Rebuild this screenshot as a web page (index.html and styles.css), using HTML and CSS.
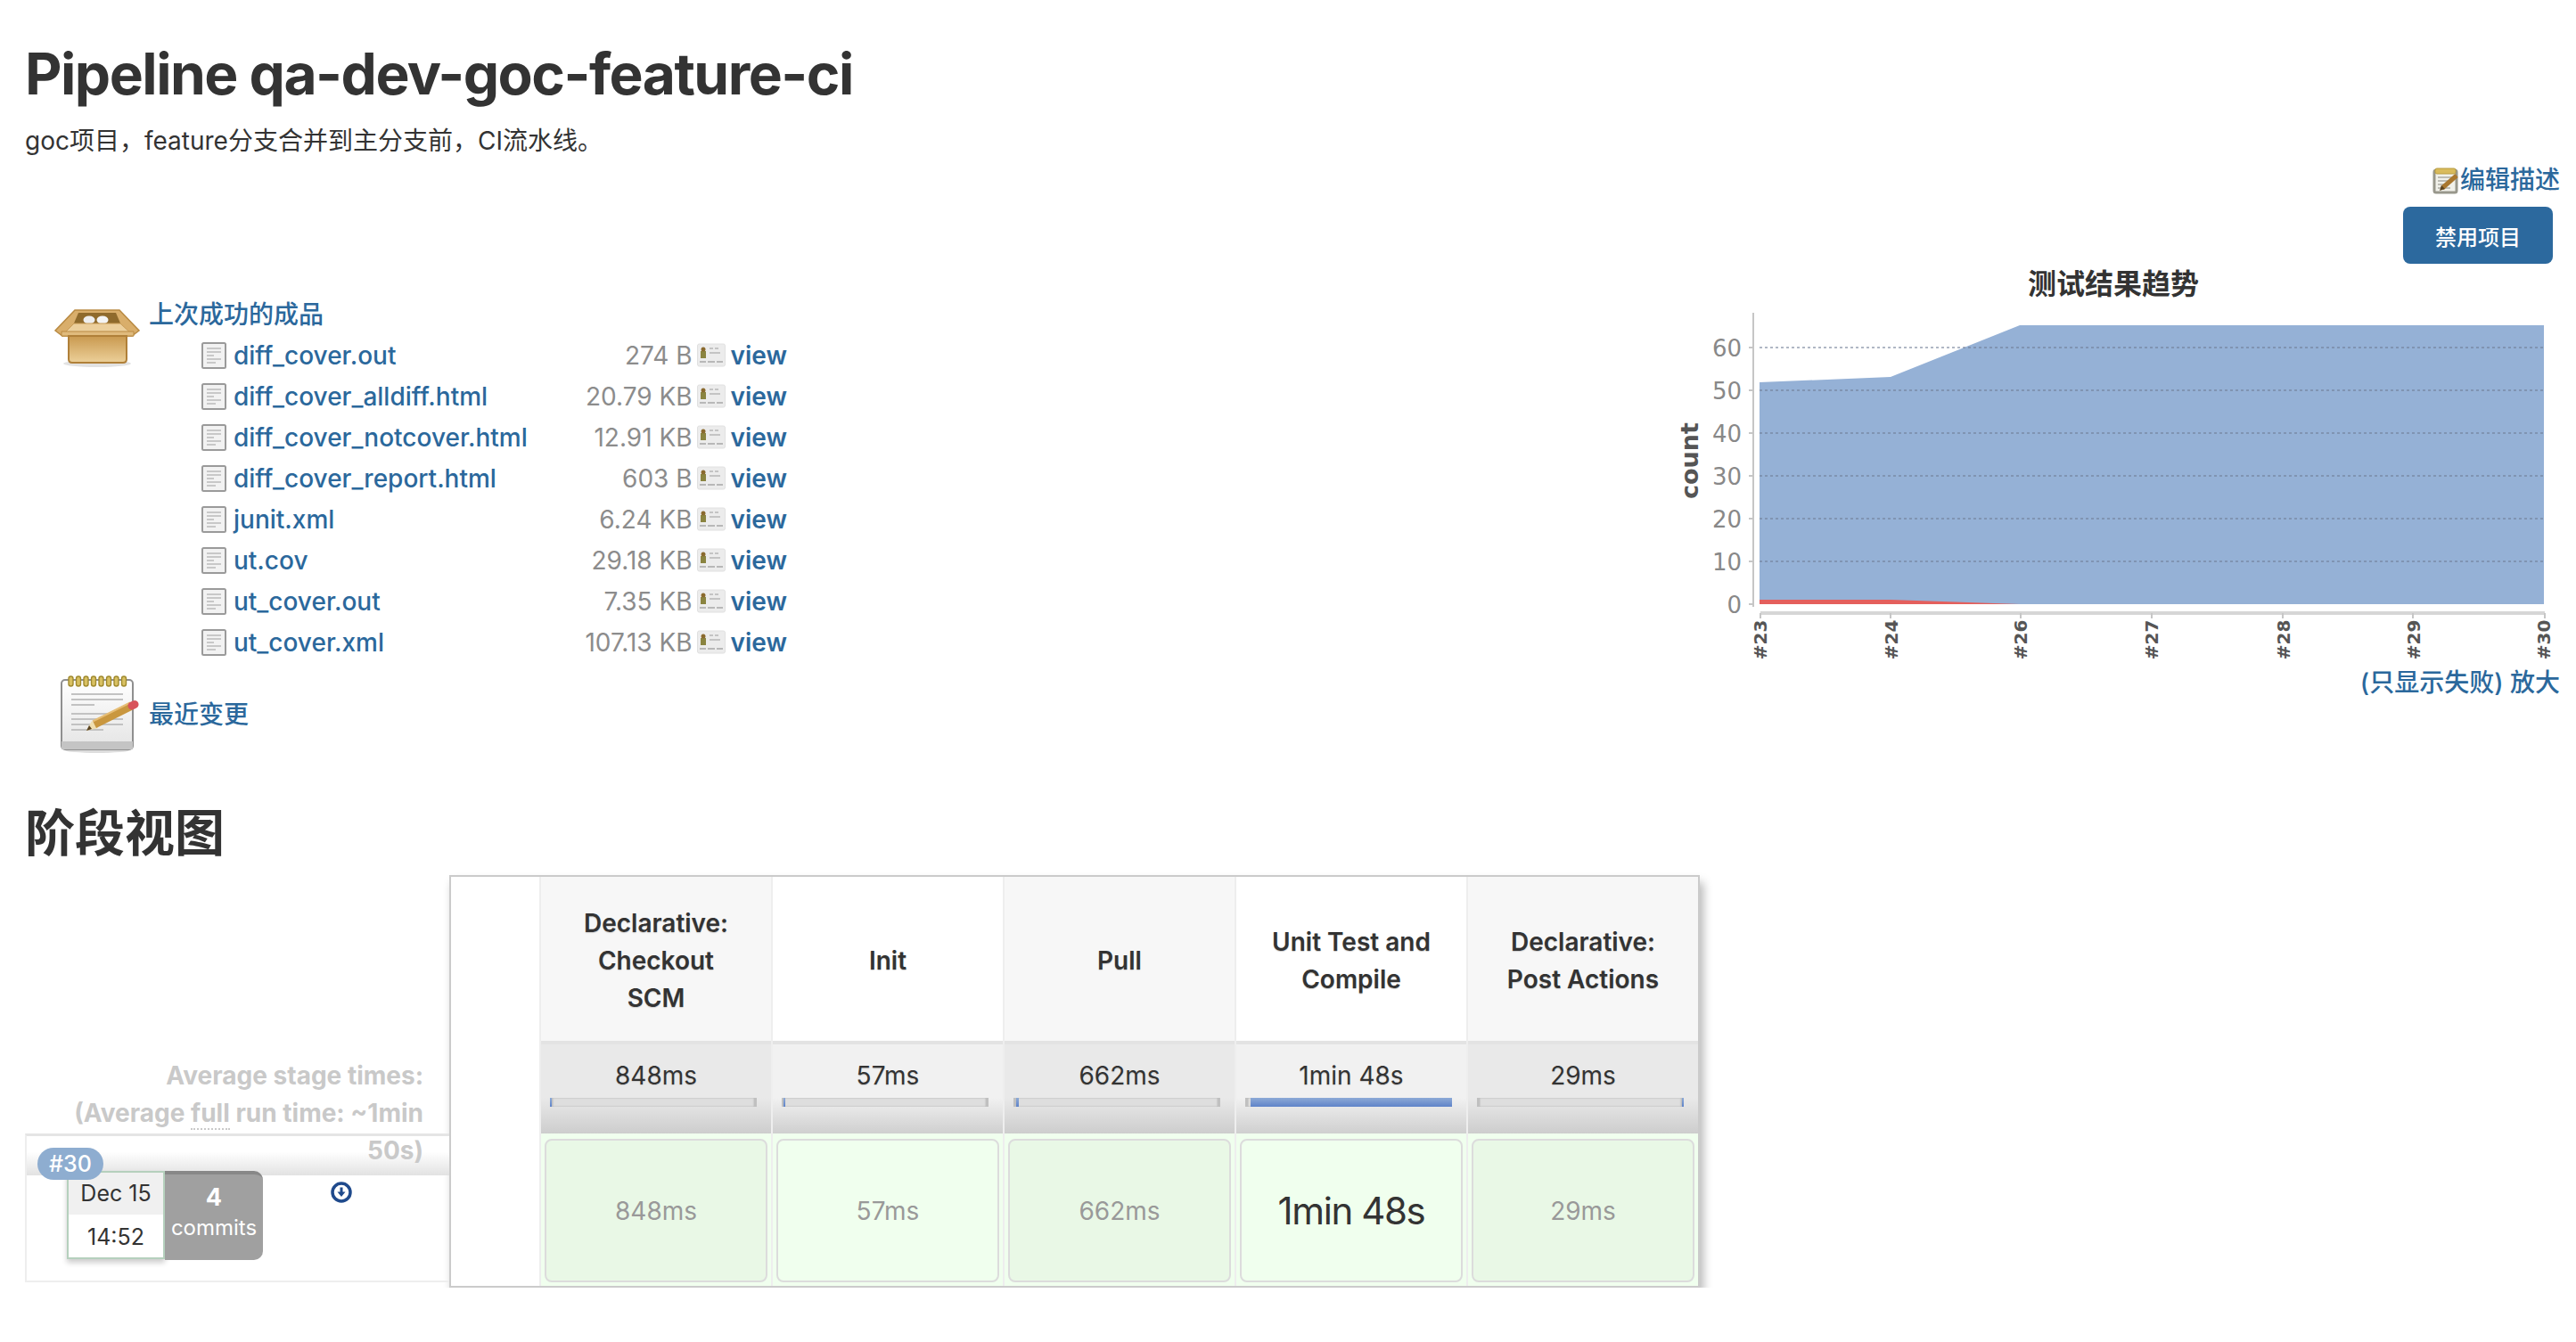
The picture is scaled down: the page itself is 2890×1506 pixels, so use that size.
FILE: index.html
```html
<!DOCTYPE html>
<html lang="zh">

<head>
    <meta charset="UTF-8">
    <title>qa-dev-goc-feature-ci</title>
    <link rel="stylesheet" href="styles.css">
</head>

<body>
    <svg class="defs" width="0" height="0">
        <defs>
            <linearGradient id="boxFront" x1="0" y1="0" x2="0" y2="1">
                <stop offset="0" stop-color="#c9994f" />
                <stop offset="1" stop-color="#ecd09a" />
            </linearGradient>
            <linearGradient id="padBody" x1="0" y1="0" x2="0" y2="1">
                <stop offset="0" stop-color="#ffffff" />
                <stop offset="1" stop-color="#e4e4e4" />
            </linearGradient>
            <symbol id="notepad" viewBox="0 0 90 90">
                <ellipse cx="43" cy="85" rx="36" ry="3" fill="#ddd" />
                <rect x="3" y="6" width="80" height="78" rx="4" fill="url(#padBody)" stroke="#8f8f8f" stroke-width="2" />
                <rect x="3" y="75" width="80" height="9" fill="#c4c4c4" />
                <g fill="#d8c062" stroke="#a08a2e" stroke-width="1.4">
                    <rect x="11" y="2" width="5" height="11" rx="2.5" />
                    <rect x="19.500" y="2" width="5" height="11" rx="2.5" />
                    <rect x="28" y="2" width="5" height="11" rx="2.5" />
                    <rect x="36.500" y="2" width="5" height="11" rx="2.5" />
                    <rect x="45" y="2" width="5" height="11" rx="2.5" />
                    <rect x="53.500" y="2" width="5" height="11" rx="2.5" />
                    <rect x="62" y="2" width="5" height="11" rx="2.5" />
                    <rect x="70.500" y="2" width="5" height="11" rx="2.5" />
                </g>
                <g stroke="#c2c2c2" stroke-width="2.2">
                    <path d="M14 22H72M14 28H72M14 34H40M14 44H72M14 50H72M14 56H72M14 62H50" />
                </g>
                <path d="M31 63 L37 52 L44 60Z" fill="#f0dfb0" />
                <path d="M31 63 L34 57 L37 61Z" fill="#5a4320" />
                <path d="M40 56 L82 35" stroke="#c9973f" stroke-width="9" />
                <path d="M38 52.500 L80 31.500" stroke="#e6bd75" stroke-width="2" />
                <path d="M82 35 L85 33.500" stroke="#d8535a" stroke-width="9" stroke-linecap="round" />
            </symbol>
            <symbol id="doc" viewBox="0 0 28 30">
                <rect x="1" y="1" width="26" height="28" rx="1.5" fill="#f2f2f2" stroke="#9a9a9a" stroke-width="2" />
                <path d="M6 7H22M6 11H22M6 15H14M6 19H22M6 23H16" stroke="#c8c8c8" stroke-width="2" />
            </symbol>
            <symbol id="viewcard" viewBox="0 0 32 28">
                <rect x="0.500" y="1" width="31" height="25" rx="2" fill="#ececec" stroke="#e0e0e0" />
                <rect x="4" y="9" width="6" height="8" fill="#8a8440" />
                <circle cx="7" cy="7" r="2.500" fill="#8a6a2e" />
                <path d="M14 6H18M20 6H24M14 11H26" stroke="#c4c4c4" stroke-width="2" />
                <path d="M3 21H10M12 21H20M22 21H29" stroke="#b8b8b8" stroke-width="2" />
            </symbol>
        </defs>
    </svg>

    <div class="page">
        <h1>Pipeline qa-dev-goc-feature-ci</h1>
        <p class="desc">goc项目，feature分支合并到主分支前，CI流水线。</p>

        <div class="actions">
            <a class="edit-link" href="#">
                <svg class="edit-icon" viewBox="0 0 31 31">
                    <rect x="2" y="4" width="25" height="25" rx="2" fill="#f1f1ea" stroke="#98978c" stroke-width="3" />
                    <rect x="3" y="2" width="23" height="6" rx="2" fill="#d9bb5c" stroke="#b89c3e" />
                    <path d="M6 12H23M6 16H18M6 20H14M6 24H20" stroke="#bdbdb5" stroke-width="2" />
                    <path d="M11 24L27 10" stroke="#a9772e" stroke-width="5" />
                    <path d="M8 27L10 21L14 25Z" fill="#5a4320" />
                </svg>
                编辑描述
            </a>
            <button class="btn-disable">禁用项目</button>
        </div>

        <div class="main">
            <div class="left">
                <div class="task">
                    <div class="task-icon">
                        <svg class="box-icon" viewBox="0 0 98 68">
                            <ellipse cx="49" cy="63" rx="38" ry="4" fill="#e2e2e2" />
                            <path d="M24 3H74L96 26L88 32H10L2 26Z" fill="#d9ae6b" stroke="#b98a42" stroke-width="1.500" />
                            <path d="M28 6H70L76 20H22Z" fill="#8f6a2c" />
                            <ellipse cx="40" cy="14" rx="6.500" ry="4.500" fill="#eeeeee" />
                            <ellipse cx="55" cy="14" rx="6.500" ry="4.500" fill="#f4f4f4" />
                            <path d="M23 18H75L90 32H9Z" fill="#eccf9c" stroke="#c89c57" stroke-width="1" />
                            <path d="M9 27H90V32H9Z" fill="#e0bb7d" stroke="#b98a42" stroke-width="1" />
                            <path d="M17 32H82V58Q82 62 78 62H21Q17 62 17 58Z" fill="url(#boxFront)" stroke="#b08039" stroke-width="2" />
                        </svg>
                    </div>
                    <div class="task-body">
                        <a class="task-link" href="#">上次成功的成品</a>
                        <div class="file-list">
                            <div class="file-row">
                                <svg class="doc-icon"><use href="#doc" /></svg>
                                <a class="file-name" href="#">diff_cover.out</a>
                                <span class="file-size">274 B</span>
                                <svg class="view-icon"><use href="#viewcard" /></svg>
                                <a class="file-view" href="#">view</a>
                            </div>
                            <div class="file-row">
                                <svg class="doc-icon"><use href="#doc" /></svg>
                                <a class="file-name" href="#">diff_cover_alldiff.html</a>
                                <span class="file-size">20.79 KB</span>
                                <svg class="view-icon"><use href="#viewcard" /></svg>
                                <a class="file-view" href="#">view</a>
                            </div>
                            <div class="file-row">
                                <svg class="doc-icon"><use href="#doc" /></svg>
                                <a class="file-name" href="#">diff_cover_notcover.html</a>
                                <span class="file-size">12.91 KB</span>
                                <svg class="view-icon"><use href="#viewcard" /></svg>
                                <a class="file-view" href="#">view</a>
                            </div>
                            <div class="file-row">
                                <svg class="doc-icon"><use href="#doc" /></svg>
                                <a class="file-name" href="#">diff_cover_report.html</a>
                                <span class="file-size">603 B</span>
                                <svg class="view-icon"><use href="#viewcard" /></svg>
                                <a class="file-view" href="#">view</a>
                            </div>
                            <div class="file-row">
                                <svg class="doc-icon"><use href="#doc" /></svg>
                                <a class="file-name" href="#">junit.xml</a>
                                <span class="file-size">6.24 KB</span>
                                <svg class="view-icon"><use href="#viewcard" /></svg>
                                <a class="file-view" href="#">view</a>
                            </div>
                            <div class="file-row">
                                <svg class="doc-icon"><use href="#doc" /></svg>
                                <a class="file-name" href="#">ut.cov</a>
                                <span class="file-size">29.18 KB</span>
                                <svg class="view-icon"><use href="#viewcard" /></svg>
                                <a class="file-view" href="#">view</a>
                            </div>
                            <div class="file-row">
                                <svg class="doc-icon"><use href="#doc" /></svg>
                                <a class="file-name" href="#">ut_cover.out</a>
                                <span class="file-size">7.35 KB</span>
                                <svg class="view-icon"><use href="#viewcard" /></svg>
                                <a class="file-view" href="#">view</a>
                            </div>
                            <div class="file-row">
                                <svg class="doc-icon"><use href="#doc" /></svg>
                                <a class="file-name" href="#">ut_cover.xml</a>
                                <span class="file-size">107.13 KB</span>
                                <svg class="view-icon"><use href="#viewcard" /></svg>
                                <a class="file-view" href="#">view</a>
                            </div>
                        </div>
                    </div>
                </div>
                <div class="task task-changes">
                    <div class="task-icon task-icon-pad">
                        <svg class="pad-icon"><use href="#notepad" /></svg>
                    </div>
                    <a class="task-link" href="#">最近变更</a>
                </div>
            </div>

            <div class="trend">
                <svg class="trend-chart" viewBox="1872 290 1000 460">
                    <text class="chart-title" x="2371" y="331" text-anchor="middle">测试结果趋势</text>
                    <path d="M1974 430L2121 424L2266 366H2854V679H1974Z" fill="#95b1d6" />
                    <path d="M1974 674H2121L2266 679H1974Z" fill="#e45f5c" />
                    <g class="grid">
                        <path d="M1974 391H2854M1974 439H2854M1974 487H2854M1974 535H2854M1974 583H2854M1974 631H2854" />
                    </g>
                    <path class="axis" d="M1967 352V682M1962 391H1967M1962 439H1967M1962 487H1967M1962 535H1967M1962 583H1967M1962 631H1967M1962 679H1967" />
                    <g class="y-labels" text-anchor="end">
                        <text x="1954" y="401">60</text>
                        <text x="1954" y="449">50</text>
                        <text x="1954" y="497">40</text>
                        <text x="1954" y="545">30</text>
                        <text x="1954" y="593">20</text>
                        <text x="1954" y="641">10</text>
                        <text x="1954" y="689">0</text>
                    </g>
                    <text class="y-title" transform="translate(1905 518) rotate(-90)" text-anchor="middle">count</text>
                    <path class="x-axis" d="M1975 689H2855" />
                    <path class="axis" d="M1975 689V695M2121 689V695M2267 689V695M2414 689V695M2561 689V695M2707 689V695M2855 689V695" />
                    <g class="x-labels" text-anchor="middle">
                        <text transform="translate(1982 719) rotate(-90)">#23</text>
                        <text transform="translate(2129 719) rotate(-90)">#24</text>
                        <text transform="translate(2274 719) rotate(-90)">#26</text>
                        <text transform="translate(2421 719) rotate(-90)">#27</text>
                        <text transform="translate(2569 719) rotate(-90)">#28</text>
                        <text transform="translate(2715 719) rotate(-90)">#29</text>
                        <text transform="translate(2861 719) rotate(-90)">#30</text>
                    </g>
                </svg>
                <div class="trend-links"><a href="#">(只显示失败)</a> <a href="#">放大</a></div>
            </div>
        </div>

        <h2>阶段视图</h2>

        <div class="stage-view">
            <div class="history">
                <div class="averages">
                    Average stage times:<br>
                    (Average <span class="full">full</span> run time: ~1min<br>
                    50s)
                </div>
                <div class="build-row">
                    <div class="build-head"></div>
                    <span class="badge">#30</span>
                    <div class="build-body">
                        <div class="date-box">
                            <div class="date-day">Dec 15</div>
                            <div class="date-time">14:52</div>
                        </div>
                        <div class="commits">
                            <strong>4</strong>
                            <span>commits</span>
                        </div>
                        <svg class="dl-icon" viewBox="0 0 24 24">
                            <circle cx="12" cy="12" r="10" fill="#fff" stroke="#1f4a8c" stroke-width="3.500" />
                            <path d="M10.500 6.500H13.500V11.500H16.500L12 17L7.500 11.500H10.500Z" fill="#1f4a8c" />
                        </svg>
                    </div>
                </div>
            </div>

            <div class="stage-table">
                <div class="stage-blank"></div>
                <div class="stage-col">
                    <div class="stage-head">Declarative:<br>Checkout<br>SCM</div>
                    <div class="stage-avg">
                        <div class="avg-time">848ms</div>
                        <div class="avg-bar"><div class="avg-fill" style="margin-left:-3px;width:2px"></div></div>
                    </div>
                    <div class="stage-cell"><div class="cell-box">848ms</div></div>
                </div>
                <div class="stage-col">
                    <div class="stage-head">Init</div>
                    <div class="stage-avg">
                        <div class="avg-time">57ms</div>
                        <div class="avg-bar"><div class="avg-fill" style="margin-left:-1px;width:2px"></div></div>
                    </div>
                    <div class="stage-cell"><div class="cell-box">57ms</div></div>
                </div>
                <div class="stage-col">
                    <div class="stage-head">Pull</div>
                    <div class="stage-avg">
                        <div class="avg-time">662ms</div>
                        <div class="avg-bar"><div class="avg-fill" style="margin-left:0;width:3px"></div></div>
                    </div>
                    <div class="stage-cell"><div class="cell-box">662ms</div></div>
                </div>
                <div class="stage-col">
                    <div class="stage-head">Unit Test and<br>Compile</div>
                    <div class="stage-avg">
                        <div class="avg-time">1min 48s</div>
                        <div class="avg-bar"><div class="avg-fill" style="margin-left:3px;width:226px"></div></div>
                    </div>
                    <div class="stage-cell"><div class="cell-box cell-big">1min 48s</div></div>
                </div>
                <div class="stage-col">
                    <div class="stage-head">Declarative:<br>Post Actions</div>
                    <div class="stage-avg">
                        <div class="avg-time">29ms</div>
                        <div class="avg-bar"><div class="avg-fill" style="margin-left:227px;width:2px"></div></div>
                    </div>
                    <div class="stage-cell"><div class="cell-box">29ms</div></div>
                </div>
            </div>
        </div>
    </div>
</body>

</html>
```

FILE: styles.css
```css
* {
    box-sizing: border-box;
}

html,
body {
    margin: 0;
    background: #fff;
}

body {
    color: #333;
    font-family: Inter, "Noto Sans CJK SC", sans-serif;
    font-size: 28px;
    line-height: 46px;
}

a {
    color: #2b689c;
    text-decoration: none;
}

.defs {
    display: block;
    height: 0;
}

.page {
    padding: 50px 18px 0 28px;
}

h1 {
    margin: 0;
    font-size: 64px;
    line-height: 66px;
    font-weight: 700;
    letter-spacing: -1.5px;
}

.desc {
    margin: 21px 0 0;
    line-height: 42px;
}

.actions {
    display: flex;
    flex-direction: column;
    align-items: flex-end;
    margin-top: 3px;
}

.edit-link {
    display: flex;
    align-items: center;
    height: 40px;
    font-weight: 500;
}

.edit-icon {
    width: 31px;
    height: 31px;
}

.btn-disable {
    width: 168px;
    height: 64px;
    margin: 10px 8px 0 0;
    border: 0;
    border-radius: 8px;
    background: #2c699e;
    color: #fff;
    font: 500 24px Inter, "Noto Sans CJK SC", sans-serif;
}

.main {
    display: flex;
    justify-content: space-between;
    margin-top: 5px;
}

.left {
    padding-top: 29px;
}

.task {
    display: flex;
}

.task-icon {
    flex: none;
    width: 139px;
    padding-left: 32px;
}

.box-icon {
    display: block;
    width: 98px;
    height: 68px;
    margin-top: 15px;
}

.task-link {
    font-weight: 500;
}

.file-list {
    width: 657px;
    margin-left: 59px;
}

.file-row {
    display: flex;
    align-items: center;
    height: 46px;
}

.doc-icon {
    flex: none;
    width: 28px;
    height: 30px;
    margin-right: 8px;
}

.file-name {
    flex: 1;
    font-weight: 500;
}

.file-size {
    color: #8c8c8c;
}

.view-icon {
    flex: none;
    width: 32px;
    height: 28px;
    margin: 0 6px 0 5px;
}

.file-view {
    font-weight: 600;
}

.task-changes {
    align-items: center;
    margin-top: 13px;
}

.task-icon-pad {
    padding-left: 38px;
}

.pad-icon {
    display: block;
    width: 90px;
    height: 90px;
}

.trend {
    width: 1000px;
    margin-top: -12px;
}

.trend-chart {
    display: block;
    width: 1000px;
    height: 460px;
}

.chart-title {
    font: 600 32px "Noto Sans CJK SC", sans-serif;
    fill: #333;
}

.grid path {
    fill: none;
    stroke: #6f7b96;
    stroke-opacity: 0.55;
    stroke-width: 2;
    stroke-dasharray: 3 3;
}

.axis {
    fill: none;
    stroke: #c6c6c6;
    stroke-width: 2;
}

.x-axis {
    fill: none;
    stroke: #d6d6d6;
    stroke-width: 4;
}

.y-labels text {
    font: 26px "DejaVu Sans", sans-serif;
    fill: #888;
}

.y-title {
    font: 700 27px "DejaVu Sans", sans-serif;
    fill: #555;
}

.x-labels text {
    font: 700 20px "DejaVu Sans", sans-serif;
    fill: #555;
}

.trend-links {
    margin-top: -6px;
    line-height: 46px;
    text-align: right;
    font-weight: 500;
}

h2 {
    margin: 53px 0 0;
    font-size: 56px;
    line-height: 70px;
    font-weight: 700;
}

.stage-view {
    display: flex;
    margin-top: 12px;
}

.history {
    flex: none;
    width: 476px;
    padding-top: 204px;
}

.averages {
    position: relative;
    z-index: 1;
    height: 86px;
    padding-right: 29px;
    color: #c9c9c9;
    font-weight: 700;
    line-height: 42px;
    text-align: right;
}

.full {
    border-bottom: 2px dotted #c9c9c9;
}

.build-row {
    position: relative;
    height: 167px;
    border: 2px solid #eee;
    border-top: 3px solid #e5e5e5;
    border-right: 0;
}

.build-head {
    height: 44px;
    background: linear-gradient(#fff 40%, #e2e2e2);
}

.badge {
    position: absolute;
    top: 13px;
    left: 12px;
    width: 74px;
    height: 36px;
    border-radius: 18px;
    background: #8eadd0;
    color: #fff;
    font-size: 25px;
    font-weight: 500;
    line-height: 36px;
    text-align: center;
}

.build-body {
    display: flex;
    align-items: flex-start;
    margin-top: -5px;
    padding-left: 45px;
}

.date-box {
    width: 110px;
    height: 99px;
    border: 2px solid #b5d0bd;
    background: #fff;
    box-shadow: 0 4px 6px rgba(0, 0, 0, 0.2);
    font-size: 25px;
    line-height: 47px;
    text-align: center;
}

.date-day {
    background: #f0f0f0;
}

.date-time {
    padding-top: 2px;
}

.commits {
    display: flex;
    flex-direction: column;
    align-items: center;
    width: 110px;
    height: 100px;
    padding-top: 8px;
    border-top: 4px solid #888;
    border-radius: 0 10px 10px 0;
    background: #a0a0a0;
    color: #fff;
    font-size: 24px;
    line-height: 36px;
}

.commits strong {
    font-size: 27px;
}

.commits span {
    margin-top: -2px;
}

.dl-icon {
    width: 24px;
    height: 24px;
    margin: 12px 0 0 76px;
}

.stage-table {
    display: flex;
    flex: none;
    width: 1403px;
    height: 463px;
    border: 2px solid #cbcbcb;
    box-shadow: 4px 8px 10px #b8b8b8;
}

.stage-blank {
    flex: none;
    width: 99px;
}

.stage-col {
    flex: none;
    width: 260px;
    border-left: 2px solid #eee;
}

.stage-head {
    display: flex;
    align-items: center;
    justify-content: center;
    height: 184px;
    padding-top: 3px;
    background: #f7f7f7;
    font-weight: 600;
    line-height: 42px;
    text-align: center;
    text-shadow: 0 1px 1px #ccc;
}

.stage-col:nth-child(odd) .stage-head {
    background: #fff;
}

.stage-avg {
    height: 104px;
    border-top: 4px solid #e3e3e3;
    background: linear-gradient(#e9e9e9 60%, #cdcdcd);
    text-align: center;
}

.stage-col:nth-child(odd) .stage-avg {
    background: linear-gradient(#f1f1f1 60%, #cfcfcf);
}

.avg-time {
    height: 60px;
    padding-top: 12px;
    line-height: 46px;
    text-shadow: 0 1px 1px #ccc;
}

.avg-bar {
    height: 10px;
    margin: 0 16px 0 10px;
    border-left: 3px solid #c0c0c0;
    border-right: 3px solid #c0c0c0;
    background: #dedede;
    box-shadow: inset 0 0 2px #a8a8a8;
}

.avg-fill {
    height: 10px;
    background: linear-gradient(#8daad6, #5f83c9);
}

.stage-cell {
    height: 171px;
    padding: 6px 4px 4px;
    background: #f0ffee;
}

.cell-box {
    display: flex;
    align-items: center;
    justify-content: center;
    height: 161px;
    border: 2px solid #dcdcdc;
    border-radius: 8px;
    background: #f0ffee;
    color: #999;
}

.stage-col:nth-child(even) .cell-box {
    background: #e9f8e6;
}

.cell-big {
    color: #333;
    font-size: 42px;
    letter-spacing: -1.4px;
}
```
